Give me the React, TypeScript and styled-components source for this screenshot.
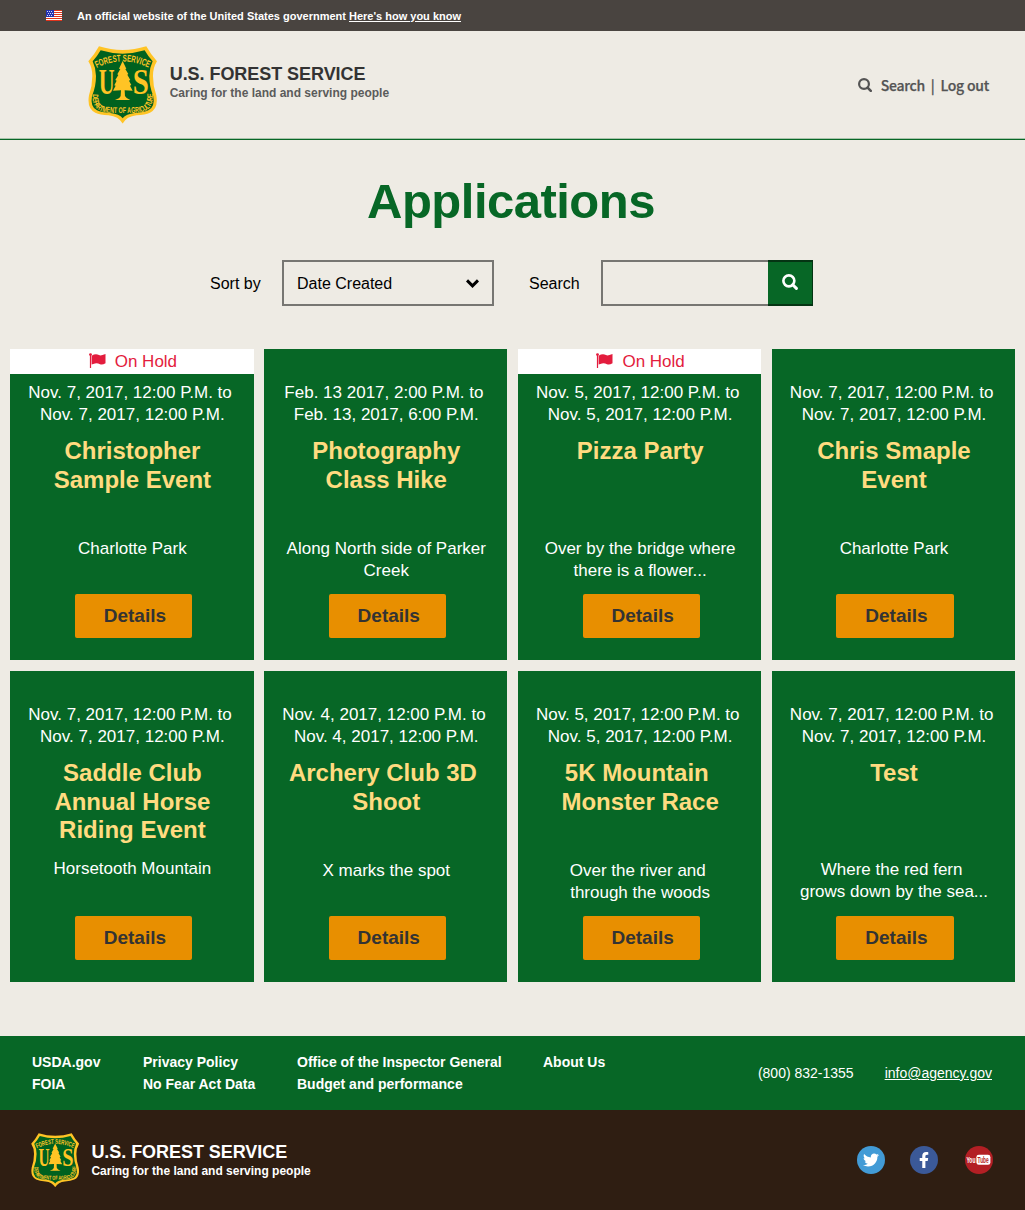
import React from 'react';
import styled, { createGlobalStyle } from 'styled-components';
import { FaTwitter, FaFacebookF } from 'react-icons/fa';

const GREEN = '#076726';
const SANS = '"Liberation Sans", Arial, sans-serif';

const GlobalStyle = createGlobalStyle`
  * { box-sizing: border-box; }
  body { margin: 0; background: #eeebe4; font-family: ${SANS}; }
  h1, h2, p, ul { margin: 0; padding: 0; }
  svg { display: block; flex: none; }
`;

const Page = styled.div`
  width: 1025px;
  height: 1210px;
  display: flex;
  flex-direction: column;
  overflow: hidden;
`;

const Banner = styled.div`
  height: 31px;
  flex: none;
  display: flex;
  align-items: center;
  gap: 15px;
  padding: 0 0 0 46px;
  background: #494440;
  color: #fff;
  font-size: 11px;
  font-weight: 700;
  line-height: 13px;
  span { padding-top: 2px; }
  a { color: #fff; text-decoration: underline; }
`;

const Header = styled.header`
  height: 109px;
  flex: none;
  display: flex;
  justify-content: space-between;
  padding: 15px 36px 0 88px;
  border-bottom: 1px solid ${GREEN};
  box-shadow: inset 0 -1px 0 #a9c3ab;
`;

const Brand = styled.div<{ $gap: number }>`
  display: flex;
  gap: ${(p) => p.$gap}px;
`;

const BrandText = styled.div<{ $top: number }>`
  padding-top: ${(p) => p.$top}px;
`;

const BrandName = styled.p<{ $color: string }>`
  font-size: 18px;
  font-weight: 700;
  line-height: 20px;
  letter-spacing: -0.05px;
  color: ${(p) => p.$color};
`;

const Tagline = styled.p<{ $color: string }>`
  font-size: 12px;
  font-weight: 700;
  line-height: 18px;
  color: ${(p) => p.$color};
`;

const UserNav = styled.nav`
  display: flex;
  height: 22px;
  margin-top: 28px;
  align-items: center;
  color: #545454;
  font-family: "Noto Sans CJK SC", "Noto Sans CJK JP", sans-serif;
  font-size: 14px;
  font-weight: 500;
  letter-spacing: -0.24px;
  line-height: 22px;
  white-space: pre;
  -webkit-text-stroke: 0.25px #545454;
  svg { margin-right: 9px; }
`;

const Main = styled.main`
  height: 896px;
  flex: none;
`;

const PageTitle = styled.h1`
  padding-top: 33px;
  color: ${GREEN};
  font-size: 49px;
  line-height: 56px;
  letter-spacing: -0.52px;
  text-align: center;
  text-indent: -3px;
`;

const Controls = styled.div`
  display: flex;
  align-items: center;
  margin-top: 31px;
  padding-left: 210px;
  height: 46px;
  font-size: 16px;
  color: #000;
`;

const Label = styled.label`
  width: 72px;
  padding-top: 2px;
`;

const SelectBox = styled.div`
  display: flex;
  align-items: center;
  justify-content: space-between;
  width: 212px;
  height: 46px;
  margin-right: 35px;
  padding: 0 13px;
  border: 2px solid #777672;
  span { padding-top: 2px; }
`;

const SearchBox = styled.div`
  display: flex;
  width: 212px;
  height: 46px;
  border: 2px solid #777672;
  border-right: 0;
`;

const SearchButton = styled.button`
  display: flex;
  justify-content: center;
  align-items: center;
  width: 45px;
  height: 46px;
  margin: -2px 0 0 auto;
  padding: 0 0 3px;
  border: solid #043413;
  border-width: 2px 1px 2px 0;
  background: ${GREEN};
`;

const Grid = styled.div`
  display: grid;
  grid-template-columns: repeat(4, 243.3px);
  gap: 11px 10.57px;
  padding: 43px 0 0 10.25px;
`;

const Card = styled.article`
  display: grid;
  grid-template-rows: 33px 55px 101px 56px 44px;
  height: 311px;
  background: ${GREEN};
  color: #fff;
  text-align: center;
`;

const Badge = styled.div`
  display: flex;
  justify-content: center;
  align-items: center;
  gap: 9px;
  height: 25px;
  padding-left: 2px;
  background: #fff;
  color: #e31c3d;
  font-size: 17px;
  line-height: 25px;
  svg { margin-bottom: 2px; }
`;

const Lines = styled.p<{ $lift?: number }>`
  margin-top: ${(p) => -(p.$lift ?? 0)}px;
  padding-left: 1px;
  font-size: 17px;
  line-height: 22px;
  white-space: pre;
`;

const CardTitle = styled.h2`
  padding-left: 1px;
  color: #ffdb80;
  font-size: 24px;
  line-height: 28.6px;
  white-space: pre;
`;

const DetailsButton = styled.button`
  justify-self: center;
  width: 117.2px;
  height: 44px;
  margin-left: 3px;
  padding: 0 0 0 3px;
  border: 0;
  border-radius: 2px;
  background: #e88f00;
  color: #333;
  font: 700 19px ${SANS};
`;

const LinkBar = styled.div`
  height: 74px;
  flex: none;
  display: flex;
  justify-content: space-between;
  padding: 15px 33px 0 32px;
  background: ${GREEN};
  color: #fff;
  font-size: 14px;
  line-height: 22px;
`;

const LinkGrid = styled.div`
  display: grid;
  grid-template-columns: 111px 154px 246px auto;
  align-content: start;
  font-weight: 700;
`;

const Contact = styled.div`
  display: flex;
  gap: 31px;
  padding-top: 11px;
  a { color: #fff; text-decoration: underline; }
`;

const Bottom = styled.footer`
  height: 100px;
  flex: none;
  display: flex;
  justify-content: space-between;
  padding: 22.5px 32.3px 0 30.5px;
  background: #2f1e12;
`;

const Social = styled.div`
  display: flex;
  padding-top: 13.5px;
`;

const Circle = styled.a<{ $bg: string; $gap?: number }>`
  display: flex;
  align-items: center;
  justify-content: center;
  width: 28px;
  height: 28px;
  margin-right: ${(p) => p.$gap ?? 0}px;
  border-radius: 50%;
  background: ${(p) => p.$bg};
  color: #fff;
`;

const Seal = ({ width, id }: { width: number; id: string }) => (
  <svg width={width} height={(width * 234) / 208} viewBox="264 138 208 234" fill="#ffc425">
    <path d="M297 139 Q332 150 368 150 Q404 150 439 139 Q454 166 471 184 Q459 203 459 228 Q459 258 469 286 Q476 326 450 338 Q436 345 410 346 Q380 349 368 371 Q356 349 326 346 Q300 345 286 338 Q260 326 267 286 Q277 258 277 228 Q277 203 265 184 Q282 166 297 139Z" />
    <path fill="#00611f" d="M302 151 Q335 161 368 161 Q401 161 434 151 Q445 170 458 184 Q448 205 448 228 Q448 260 460 288 Q466 321 445 331 Q432 337 405 339 Q378 342 368 355 Q358 342 331 339 Q304 337 291 331 Q270 321 276 288 Q288 260 288 228 Q288 205 278 184 Q291 170 302 151Z" />
    <path d="M368 183L379 206L376 207L385 222L382 224L391 240L387 242L394 255L390 257L398 272L374 271L375 288Q378 295 391 300L345 300Q360 295 362 288L363 271L339 272L347 257L343 256L350 242L346 240L355 225L352 223L361 207L357 206Z" />
    <g fontFamily='"Liberation Serif", serif' fontWeight="700" fontSize="110">
      <text transform="translate(296 281) scale(.6 1)">U</text>
      <text transform="translate(398 281) scale(.79 1)">S</text>
    </g>
    <path id={`${id}-top`} fill="none" d="M290 204 Q368 165 448 204" />
    <path id={`${id}-bottom`} fill="none" d="M278 283 Q274 336 325 338 Q368 341 412 338 Q462 336 459 280" />
    <g fontFamily={SANS} fontWeight="700">
      <text fontSize="29">
        <textPath href={`#${id}-top`} textLength="162" lengthAdjust="spacingAndGlyphs">FOREST SERVICE</textPath>
      </text>
      <text fontSize="25">
        <textPath href={`#${id}-bottom`} textLength="256" lengthAdjust="spacingAndGlyphs">DEPARTMENT OF AGRICULTURE</textPath>
      </text>
    </g>
  </svg>
);

const UsFlag = () => (
  <svg width="16" height="11" viewBox="0 0 16 11">
    <rect width="16" height="11" fill="#fff" />
    {[0, 2, 4, 6, 8, 10].map((y) => (
      <rect key={y} y={y} width="16" height="1" fill="#e0341c" />
    ))}
    <rect width="8" height="7" fill="#2434b4" />
    {[1, 3, 5].map((y) =>
      [1, 3, 5].map((x) => <rect key={`${x}-${y}`} x={x + (y === 3 ? 1 : 0)} y={y} width="1" height="1" fill="#d4d8f6" />)
    )}
  </svg>
);

const Magnifier = ({ size, width }: { size: number; width: number }) => (
  <svg width={size} height={size} viewBox="0 0 14 14" fill="none" stroke="currentColor" strokeWidth={width}>
    <circle cx="6" cy="6" r="4.9" />
    <path d="M9.6 9.6 L12.8 12.8" strokeWidth={width + 0.4} strokeLinecap="round" />
  </svg>
);

const HoldFlag = () => (
  <svg width="17" height="16" viewBox="0 0 17 16" fill="currentColor">
    <circle cx="1.5" cy="1.6" r="1.4" />
    <rect x="0.9" y="1.5" width="1.2" height="13.5" />
    <path d="M2.6 2.8 Q6 .8 8.5 1.6 Q11 3 13.5 2 L16.5 1 V10.2 Q13.5 12.2 11 11.3 Q8.5 9.8 6 10.4 L2.6 11.6Z" />
  </svg>
);

const YouTubeMark = () => (
  <svg width="28" height="28" viewBox="0 0 28 28" fontFamily={SANS} fontWeight="700" fontSize="9.6">
    <text transform="translate(1.4 17.2) scale(.52 1)" fill="#fff">You</text>
    <rect x="11.4" y="8.8" width="14" height="10" rx="2.4" fill="#fff" />
    <text transform="translate(12.6 17.2) scale(.5 1)" fill="#b31f24">Tube</text>
  </svg>
);

type Application = { dates: string; title: string; place: string; hold?: boolean; lift?: number };

const same = (d: string) => `Nov. ${d}, 2017, 12:00 P.M. to \nNov. ${d}, 2017, 12:00 P.M.`;

const applications: Application[] = [
  { dates: same('7'), title: 'Christopher\nSample Event', place: 'Charlotte Park', hold: true },
  { dates: 'Feb. 13 2017, 2:00 P.M. to \nFeb. 13, 2017, 6:00 P.M.', title: 'Photography\nClass Hike', place: 'Along North side of Parker\nCreek' },
  { dates: same('5'), title: 'Pizza Party', place: 'Over by the bridge where\nthere is a flower...', hold: true },
  { dates: same('7'), title: 'Chris Smaple\nEvent', place: 'Charlotte Park' },
  { dates: same('7'), title: 'Saddle Club\nAnnual Horse\nRiding Event', place: 'Horsetooth Mountain', lift: 2 },
  { dates: same('4'), title: 'Archery Club 3D \nShoot', place: 'X marks the spot' },
  { dates: same('5'), title: '5K Mountain \nMonster Race', place: 'Over the river and \nthrough the woods' },
  { dates: same('7'), title: 'Test', place: 'Where the red fern \ngrows down by the sea...', lift: 1 },
];

const links = ['USDA.gov', 'Privacy Policy', 'Office of the Inspector General', 'About Us', 'FOIA', 'No Fear Act Data', 'Budget and performance'];

export default function App() {
  return (
    <Page>
      <GlobalStyle />
      <Banner>
        <UsFlag />
        <span>
          An official website of the United States government <a>Here's how you know</a>
        </span>
      </Banner>
      <Header>
        <Brand $gap={12.4}>
          <Seal width={69.3} id="header-seal" />
          <BrandText $top={18}>
            <BrandName $color="#333">U.S. FOREST SERVICE</BrandName>
            <Tagline $color="#5b5b5b">Caring for the land and serving people</Tagline>
          </BrandText>
        </Brand>
        <UserNav>
          <Magnifier size={14} width={2.2} />
          {'Search  |  Log out'}
        </UserNav>
      </Header>
      <Main>
        <PageTitle>Applications</PageTitle>
        <Controls>
          <Label>Sort by</Label>
          <SelectBox>
            <span>Date Created</span>
            <svg width="13" height="9" viewBox="0 0 13 9" fill="none" stroke="#000" strokeWidth="3">
              <path d="M1 1.4 L6.5 6.8 L12 1.4" />
            </svg>
          </SelectBox>
          <Label>Search</Label>
          <SearchBox>
            <SearchButton aria-label="Search">
              <svg width="16" height="16" viewBox="0 0 14 14" fill="none" stroke="#fff" strokeWidth="2.3">
                <circle cx="6" cy="6" r="4.8" />
                <path d="M9.4 9.4 L12.6 12.6" strokeWidth="2.6" strokeLinecap="round" />
              </svg>
            </SearchButton>
          </SearchBox>
        </Controls>
        <Grid>
          {applications.map((app, i) => (
            <Card key={i}>
              <div>
                {app.hold && (
                  <Badge>
                    <HoldFlag />
                    On Hold
                  </Badge>
                )}
              </div>
              <Lines>{app.dates}</Lines>
              <CardTitle>{app.title}</CardTitle>
              <Lines $lift={app.lift}>{app.place}</Lines>
              <DetailsButton>Details</DetailsButton>
            </Card>
          ))}
        </Grid>
      </Main>
      <LinkBar>
        <LinkGrid>
          {links.map((l) => (
            <span key={l}>{l}</span>
          ))}
        </LinkGrid>
        <Contact>
          <span>(800) 832-1355</span>
          <a>info@agency.gov</a>
        </Contact>
      </LinkBar>
      <Bottom>
        <Brand $gap={12.5}>
          <Seal width={48.4} id="footer-seal" />
          <BrandText $top={9.5}>
            <BrandName $color="#fff">U.S. FOREST SERVICE</BrandName>
            <Tagline $color="#fff">Caring for the land and serving people</Tagline>
          </BrandText>
        </Brand>
        <Social>
          <Circle $bg="#429bd6" $gap={25}><FaTwitter size={16} /></Circle>
          <Circle $bg="#3b5998" $gap={27}><FaFacebookF size={16} /></Circle>
          <Circle $bg="#b31f24"><YouTubeMark /></Circle>
        </Social>
      </Bottom>
    </Page>
  );
}
